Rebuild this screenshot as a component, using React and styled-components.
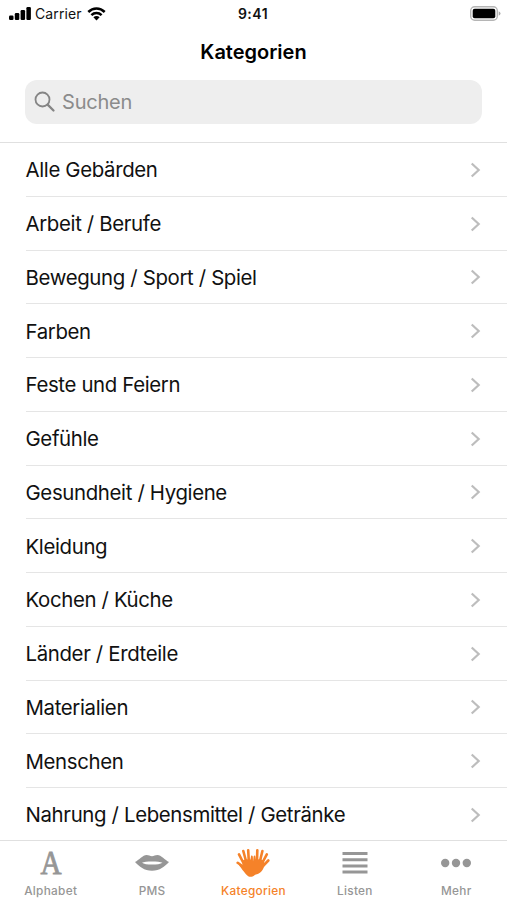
import React from "react";
import styled, { createGlobalStyle } from "styled-components";

const CATEGORIES = [
  { name: "Alle Gebärden" },
  { name: "Arbeit / Berufe" },
  { name: "Bewegung / Sport / Spiel" },
  { name: "Farben" },
  { name: "Feste und Feiern" },
  { name: "Gefühle" },
  { name: "Gesundheit / Hygiene" },
  { name: "Kleidung" },
  { name: "Kochen / Küche" },
  { name: "Länder / Erdteile" },
  { name: "Materialien" },
  { name: "Menschen" },
  { name: "Nahrung / Lebensmittel / Getränke" },
];

const LipsIcon = () => (
  <svg width="34" height="18" viewBox="0 0 34 18">
    <path
      fill="currentColor"
      fillRule="evenodd"
      d="M0 8C4 6 8 1 11.500 1c2.200 0 3.600 1.200 5.500 1.200S20.300 1 22.500 1C26 1 30 6 34 8C29.500 12.500 25 16.800 17 16.800S4.500 12.500 0 8ZM7 8.700C10 11.200 24 11.200 27.500 8.700C24 7.200 10 7.200 7 8.700Z"
    />
  </svg>
);

const HandsIcon = () => (
  <svg width="34" height="30" viewBox="0 0 34 30">
    <g stroke="currentColor" strokeWidth="2.600" strokeLinecap="round" fill="none">
      <path d="M1.700 14.800 7 18.500M3 6.300 7.200 14.500M7.300 3 10 13M12.200 2.400 12.800 13" />
      <path d="M32.300 12.500 27 18M30.800 6.300 26.500 14.500M26.400 3 24 13M21.300 2.400 21 13" />
    </g>
    <path
      fill="currentColor"
      d="M6 13C8 11 12 10.500 14 12C15 11 14.600 8.500 15.300 7.600C16.300 7 16.900 8 16.900 9.500L17 13.500L17.500 9.500C17.600 8 18.300 7.200 19.200 7.800C19.800 8.700 19.500 11 20.200 12C22 10.500 26 11 27.800 13C28.500 15.500 28.800 18 27.300 20.500C26.300 22.500 25 24 23.500 25C21.800 26.300 20.200 26 18.500 27.200C16.500 29 14 29.200 12.200 28.200C10.500 27.200 9.500 25.500 7.800 23.500C6.200 21.500 4 18.800 2.500 16.500L6.500 17.500Z"
    />
  </svg>
);

const ListIcon = () => (
  <svg width="26" height="24" viewBox="0 0 26 24">
    <path d="M.5 2.500h25M.5 8.700h25M.5 14.900h25M.5 21.100h25" stroke="currentColor" strokeWidth="3" />
  </svg>
);

const MoreIcon = () => (
  <svg width="30" height="10" viewBox="0 0 30 10" fill="currentColor">
    <circle cx="4.200" cy="5" r="4.200" />
    <circle cx="15" cy="5" r="4.200" />
    <circle cx="25.800" cy="5" r="4.200" />
  </svg>
);

const StatusBar = () => (
  <StatusRow>
    <Network>
      <svg width="23" height="13" viewBox="0 0 23 13">
        <rect x="0" y="8.500" width="4.500" height="4.500" rx="1.200" />
        <rect x="5.800" y="6" width="4.500" height="7" rx="1.200" />
        <rect x="11.600" y="3" width="4.500" height="10" rx="1.200" />
        <rect x="17.400" y="0" width="4.500" height="13" rx="1.200" />
      </svg>
      <Carrier>Carrier</Carrier>
      <svg width="19" height="14" viewBox="0 0 19 14">
        <path
          d="M1.300 5C6 .3 13 .3 17.700 5M4.400 8.200C7.300 5.400 11.700 5.400 14.600 8.200"
          fill="none"
          stroke="#000"
          strokeWidth="2.500"
        />
        <path d="M6.400 10.300C8.200 8.700 10.800 8.700 12.600 10.300L9.500 13.400Z" />
      </svg>
    </Network>
    <Clock>9:41</Clock>
    <Battery>
      <svg width="31" height="15" viewBox="0 0 31 15">
        <rect x=".7" y=".7" width="26.600" height="13.600" rx="4" fill="#fff" stroke="#b5b5b5" strokeWidth="1.400" />
        <rect x="2.700" y="2.700" width="22.600" height="9.600" rx="2" />
        <path d="M28.700 5.200q1.800 .7 1.800 2.300t-1.800 2.300z" fill="#aaa" />
      </svg>
    </Battery>
  </StatusRow>
);

const App = () => {
  return (
    <>
      <GlobalStyle />
      <Screen>
        <Header>
          <StatusBar />
          <Title>Kategorien</Title>
          <SearchField>
            <svg width="22" height="22" viewBox="0 0 22 22" fill="none" stroke="#858585">
              <circle cx="8.500" cy="8.500" r="7" strokeWidth="1.800" />
              <path d="M13.600 13.600 19.500 19.500" strokeWidth="2.300" strokeLinecap="round" />
            </svg>
            <Placeholder>Suchen</Placeholder>
          </SearchField>
        </Header>
        <List>
          {CATEGORIES.map(({ name }) => (
            <Row key={name}>
              <RowLabel>{name}</RowLabel>
              <svg width="11" height="16" viewBox="0 0 11 16">
                <path d="M1.700 1.500 8.700 8 1.700 14.500" fill="none" stroke="#bdbdbd" strokeWidth="2.200" />
              </svg>
            </Row>
          ))}
        </List>
        <TabBar>
          {TABS.map(({ label, icon, active }) => (
            <Tab key={label} $active={active}>
              <TabIcon>{icon}</TabIcon>
              <TabLabel>{label}</TabLabel>
            </Tab>
          ))}
        </TabBar>
      </Screen>
    </>
  );
};

export default App;

const GlobalStyle = createGlobalStyle`
  * {
    box-sizing: border-box;
  }

  body {
    margin: 0;
    background: #fff;
    font-family: Inter, "Liberation Sans", sans-serif;
  }

  svg {
    display: block;
    flex-shrink: 0;
  }
`;

const Screen = styled.main`
  display: flex;
  flex-direction: column;
  width: 507px;
  height: 900px;
  overflow: hidden;
  color: #111;
`;

const Header = styled.header`
  flex-shrink: 0;
  height: 143px;
  border-bottom: 1px solid #e0e0e0;
`;

const StatusRow = styled.div`
  display: grid;
  grid-template-columns: 1fr auto 1fr;
  align-items: center;
  height: 27px;
  padding: 0 6px 0 9px;
`;

const Network = styled.div`
  display: flex;
  align-items: center;
`;

const Carrier = styled.span`
  margin: 0 5px 0 3px;
  font-size: 14px;
  letter-spacing: 0.1px;
`;

const Clock = styled.span`
  margin-right: 4px;
  font-size: 14px;
  font-weight: 600;
  letter-spacing: 0.5px;
`;

const Battery = styled.div`
  display: flex;
  justify-content: flex-end;
`;

const Title = styled.h1`
  height: 53px;
  margin: 0;
  color: #000;
  font-size: 20px;
  font-weight: 600;
  line-height: 51px;
  text-align: center;
`;

const SearchField = styled.div`
  display: flex;
  align-items: center;
  height: 44px;
  margin: 0 25px;
  padding-left: 9px;
  border-radius: 12px;
  background: #eee;
`;

const Placeholder = styled.span`
  margin-left: 6px;
  color: #8b8b8b;
  font-size: 20px;
  letter-spacing: -0.2px;
`;

const List = styled.ul`
  flex: 1;
  min-height: 0;
  margin: 0;
  padding: 0 0 0 25.5px;
  overflow: hidden;
  list-style: none;
`;

const Row = styled.li`
  display: flex;
  align-items: center;
  justify-content: space-between;
  height: 53.75px;
  padding: 1px 26px 0 0;
  border-bottom: 1px solid #e5e5e5;
`;

const RowLabel = styled.span`
  font-size: 20.4px;
  letter-spacing: -0.35px;
  white-space: nowrap;
`;

const TabBar = styled.nav`
  display: grid;
  grid-template-columns: repeat(5, 1fr);
  flex-shrink: 0;
  height: 60px;
  border-top: 1px solid #e0e0e0;
`;

const Tab = styled.div`
  display: flex;
  flex-direction: column;
  align-items: center;
  color: ${({ $active }) => ($active ? "#f58229" : "#969696")};
`;

const TabIcon = styled.div`
  display: flex;
  align-items: center;
  justify-content: center;
  height: 43px;
`;

const Letter = styled.span`
  font-family: "Liberation Serif", serif;
  font-size: 33px;
  line-height: 34px;
  transform: scaleX(0.88);
  -webkit-text-stroke: 0.9px currentColor;
`;

const TabLabel = styled.span`
  font-size: 11.8px;
  font-weight: 500;
  line-height: 14px;
  letter-spacing: 0.3px;
`;

const TABS = [
  { label: "Alphabet", icon: <Letter>A</Letter> },
  { label: "PMS", icon: <LipsIcon /> },
  { label: "Kategorien", icon: <HandsIcon />, active: true },
  { label: "Listen", icon: <ListIcon /> },
  { label: "Mehr", icon: <MoreIcon /> },
];
